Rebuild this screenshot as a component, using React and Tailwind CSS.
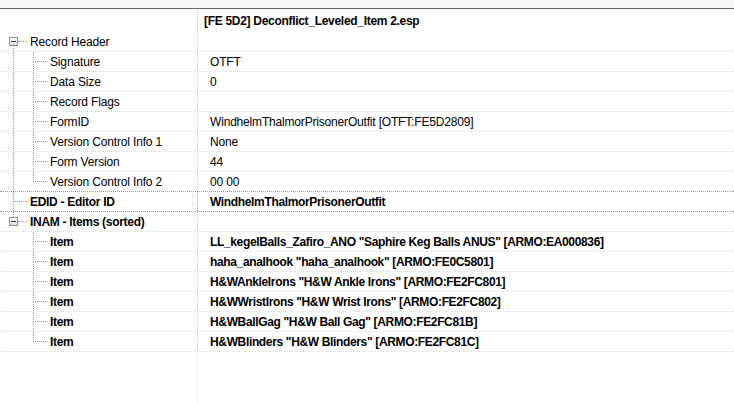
import React from "react";

const FONT = { fontFamily: '"Liberation Sans", Arial, sans-serif' };

// One segment of a tree connector: optional vertical line (full height or top half)
// and optional horizontal branch at the row's middle.
function Guide({ vertical = "none", branch = false, className = "" }) {
  return (
    <div className={`flex flex-col self-stretch ${className}`}>
      <div
        className={`flex-1 ${vertical !== "none" ? "border-l border-dotted border-[#a0a0a0]" : ""} ${
          branch ? "border-b border-dotted border-b-[#a0a0a0]" : ""
        }`}
      />
      <div className={`flex-1 ${vertical === "full" ? "border-l border-dotted border-[#a0a0a0]" : ""}`} />
    </div>
  );
}

// Collapse box of an expanded node, with its branch line and the line running down to the children
function Expander({ down, up }) {
  return (
    <div className="ml-[9px] flex w-[19px] flex-col self-stretch">
      <div className={`flex-1 ml-[4px] ${up ? "border-l border-dotted border-[#a0a0a0]" : ""}`} />
      <div className="flex items-center">
        <div className="flex h-[9px] w-[9px] items-center justify-center border border-[#8f8f8f] bg-gradient-to-b from-white to-[#dcdcdc]">
          <div className="h-px w-[5px] bg-[#2b3a5a]" />
        </div>
        <div className="h-px w-[10px] border-t border-dotted border-[#a0a0a0]" />
      </div>
      <div className={`flex-1 ml-[4px] ${down ? "border-l border-dotted border-[#a0a0a0]" : ""}`} />
    </div>
  );
}

function Row({ left, value, bold, strong, darkBottom }) {
  return (
    <div
      className={`flex h-[20px] border-b border-dotted ${
        strong || darkBottom ? "border-[#9a9a9a]" : "border-[#dddddd]"
      }`}
    >
      <div
        className={`flex w-[198px] shrink-0 items-stretch border-r border-dotted ${
          strong ? "border-r-[#9a9a9a]" : "border-r-[#c8c8c8]"
        }`}
      >
        {left}
      </div>
      <div
        className={`flex items-center pl-[12px] whitespace-nowrap ${
          bold ? "font-bold tracking-[-0.35px]" : "tracking-[-0.18px]"
        }`}
      >
        {value}
      </div>
    </div>
  );
}

const header = [
  ["Signature", "OTFT"],
  ["Data Size", "0"],
  ["Record Flags", ""],
  ["FormID", "WindhelmThalmorPrisonerOutfit [OTFT:FE5D2809]"],
  ["Version Control Info 1", "None"],
  ["Form Version", "44"],
  ["Version Control Info 2", "00 00"],
];

const items = [
  'LL_kegelBalls_Zafiro_ANO "Saphire Keg Balls ANUS" [ARMO:EA000836]',
  'haha_analhook "haha_analhook" [ARMO:FE0C5801]',
  'H&WAnkleIrons "H&W Ankle Irons" [ARMO:FE2FC801]',
  'H&WWristIrons "H&W Wrist Irons" [ARMO:FE2FC802]',
  'H&WBallGag "H&W Ball Gag" [ARMO:FE2FC81B]',
  'H&WBlinders "H&W Blinders" [ARMO:FE2FC81C]',
];

export default function App() {
  return (
    <div className="flex h-[404px] w-[734px] flex-col overflow-hidden bg-white text-[12px] text-black" style={FONT}>
      <div className="h-[9px] shrink-0 border-b border-[#6b6b6b] bg-[#f8f8f8]" />

      {/* plugin column title */}
      <div className="flex h-[23px] shrink-0">
        <div className="w-[198px] shrink-0 border-r border-[#e3e3e3]" />
        <div className="flex items-center pl-[6px] font-bold tracking-[-0.3px]">[FE 5D2] Deconflict_Leveled_Item 2.esp</div>
      </div>

      <Row
        left={
          <>
            <Expander down />
            <div className="ml-[2px] flex items-center tracking-[-0.15px]">Record Header</div>
          </>
        }
        value=""
      />
      {header.map(([name, val], i) => (
        <Row
          key={name}
          darkBottom={i === header.length - 1}
          left={
            <>
              <Guide vertical="full" className="ml-[13px] w-[20px]" />
              <Guide vertical={i === header.length - 1 ? "top" : "full"} branch className="w-[15px]" />
              <div className="ml-[2px] flex items-center whitespace-nowrap tracking-[-0.15px]">{name}</div>
            </>
          }
          value={val}
        />
      ))}

      <Row
        strong
        bold
        left={
          <>
            <Guide vertical="full" branch className="ml-[13px] w-[15px]" />
            <div className="ml-[2px] flex items-center font-bold tracking-[-0.3px]">EDID - Editor ID</div>
          </>
        }
        value="WindhelmThalmorPrisonerOutfit"
      />

      <Row
        left={
          <>
            <Expander up />
            <div className="ml-[2px] flex items-center font-bold whitespace-nowrap tracking-[-0.3px]">INAM - Items (sorted)</div>
          </>
        }
        value=""
      />
      {items.map((val, i) => (
        <Row
          key={val}
          bold
          left={
            <>
              <div className="ml-[13px] w-[20px]" />
              <Guide vertical={i === items.length - 1 ? "top" : "full"} branch className="w-[15px]" />
              <div className="ml-[2px] flex items-center font-bold tracking-[-0.3px]">Item</div>
            </>
          }
          value={val}
        />
      ))}

      {/* empty space below the tree */}
      <div className="flex flex-1">
        <div className="w-[198px] shrink-0 border-r border-dotted border-[#e3e3e3]" />
      </div>
    </div>
  );
}
